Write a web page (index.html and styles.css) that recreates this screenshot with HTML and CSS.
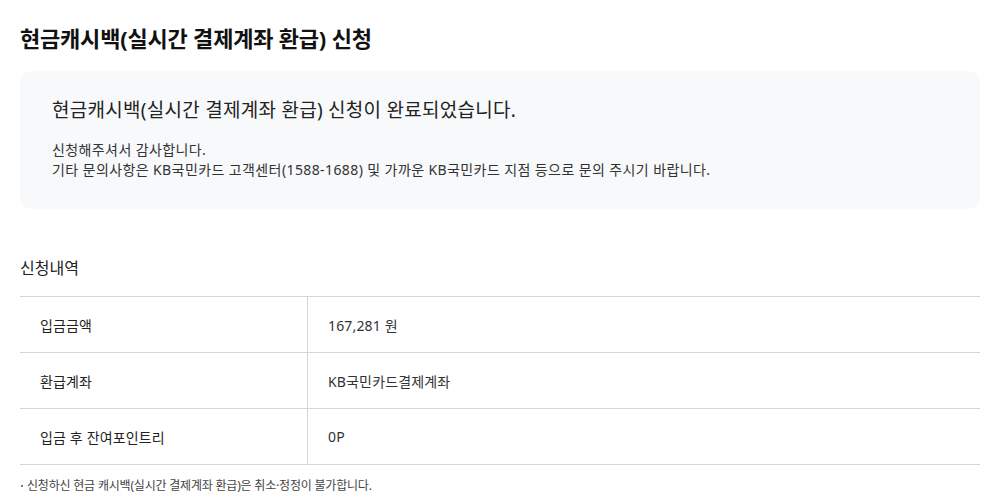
FILE: index.html
```html
<!DOCTYPE html>
<html lang="ko">
<head>
<meta charset="utf-8">
<link rel="stylesheet" href="styles.css">
</head>
<body>
<div class="page">
  <h1 class="title">현금캐시백(실시간 결제계좌 환급) 신청</h1>
  <div class="done-box">
    <p class="done-title">현금캐시백(실시간 결제계좌 환급) 신청이 완료되었습니다.</p>
    <p class="done-text">신청해주셔서 감사합니다.<br>기타 문의사항은 KB국민카드 고객센터(1588-1688) 및 가까운 KB국민카드 지점 등으로 문의 주시기 바랍니다.</p>
  </div>
  <h2 class="section-title">신청내역</h2>
  <div class="table">
    <div class="row"><div class="th">입금금액</div><div class="td">167,281 원</div></div>
    <div class="row"><div class="th">환급계좌</div><div class="td">KB국민카드결제계좌</div></div>
    <div class="row"><div class="th">입금 후 잔여포인트리</div><div class="td">0P</div></div>
  </div>
  <p class="note">신청하신 현금 캐시백(실시간 결제계좌 환급)은 취소·정정이 불가합니다.</p>
</div>
</body>
</html>
```
FILE: styles.css
```css
* { box-sizing: border-box; }
html, body { margin: 0; padding: 0; background: #fff; }
body {
  font-family: "Noto Sans", "Noto Sans CJK KR", sans-serif;
  color: #222;
}
.page {
  padding: 0 21px 0 20px;
  display: flex;
  flex-direction: column;
}
.title {
  margin: 0;
  padding-top: 22px;
  height: 71px;
  font-size: 22px;
  font-weight: 700;
  line-height: 32px;
  letter-spacing: -0.2px;
  color: #111;
}
.done-box {
  background: #f8f9fb;
  border-radius: 12px;
  padding: 25px 32px 25px 32px;
  height: 138px;
}
.done-title {
  margin: 0;
  font-size: 19px;
  line-height: 28px;
  letter-spacing: 0.27px;
  color: #222;
}
.done-text {
  margin: 16px 0 0;
  font-size: 14px;
  line-height: 20px;
  letter-spacing: 0.4px;
  color: #333;
}
.section-title {
  margin: 0;
  padding-top: 47px;
  height: 87px;
  font-size: 16px;
  font-weight: 400;
  line-height: 24px;
  letter-spacing: 0;
  color: #222;
}
.table {
  border-top: 1px solid #d6d6d6;
}
.row {
  display: grid;
  grid-template-columns: 288px 1fr;
  height: 56px;
  border-bottom: 1px solid #d6d6d6;
}
.th, .td {
  display: flex;
  align-items: center;
  font-size: 14px;
  letter-spacing: 0.15px;
  color: #222;
}
.th { padding-left: 20px; border-right: 1px solid #d6d6d6; }
.td { padding-left: 20px; color: #333; }
.note {
  margin: 0;
  padding-top: 12px;
  font-size: 12px;
  line-height: 18px;
  letter-spacing: -0.2px;
  color: #444;
  position: relative;
  padding-left: 7px;
}
.note::before {
  content: "";
  position: absolute;
  left: 1px;
  top: 20px;
  width: 2px;
  height: 2px;
  background: #777;
}
```
